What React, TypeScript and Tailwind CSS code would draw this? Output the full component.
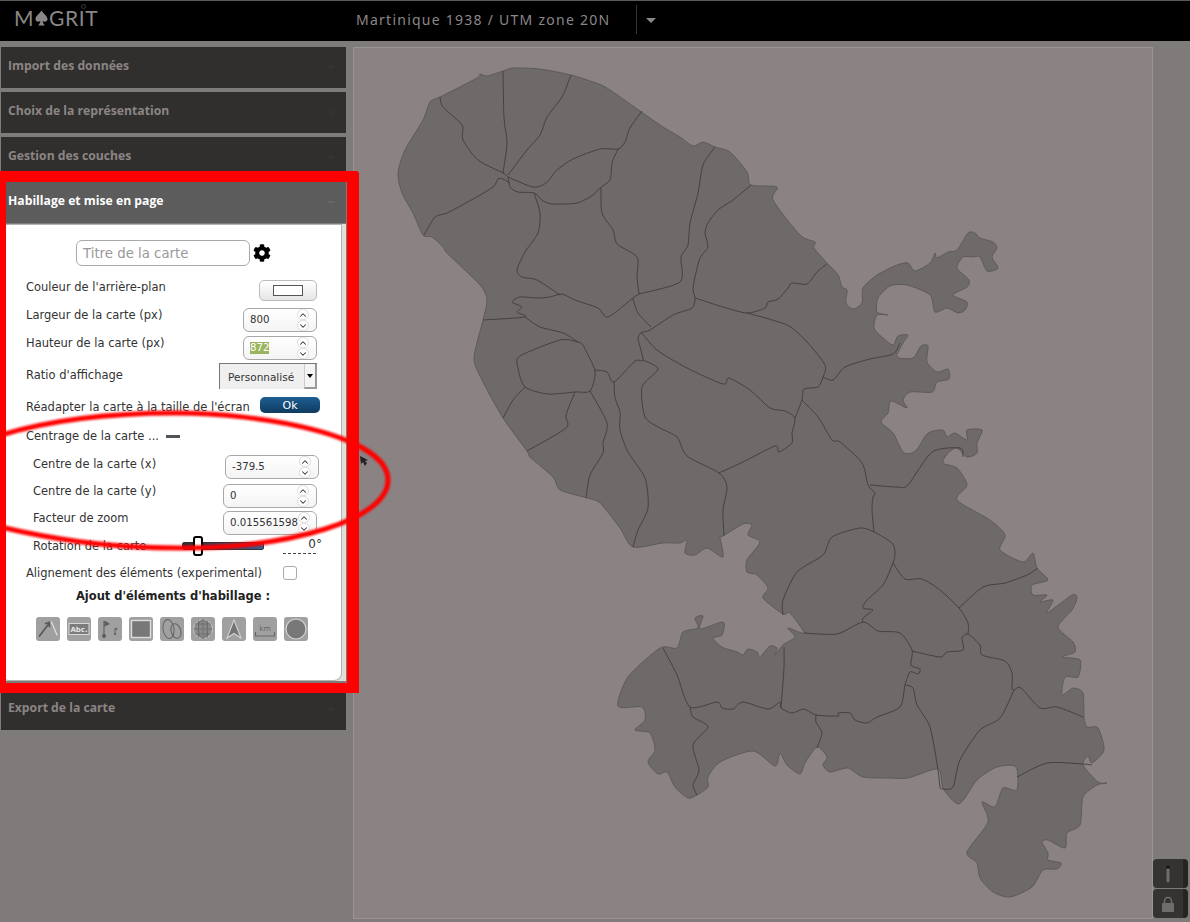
import React from "react";
import { ChevronUp, ChevronDown, Plus, Minus } from "lucide-react";
import { FaCog } from "react-icons/fa";

type Pt = [number, number];

// Catmull-Rom through the traced points, the island is hand traced from the picture
const smooth = (pts: Pt[], closed = false) => {
  const n = pts.length;
  const at = (i: number) => (closed ? pts[(i + n) % n] : pts[Math.max(0, Math.min(n - 1, i))]);
  let d = `M${pts[0][0]} ${pts[0][1]}`;
  const last = closed ? n : n - 1;
  for (let i = 0; i < last; i++) {
    const [p0, p1, p2, p3] = [at(i - 1), at(i), at(i + 1), at(i + 2)];
    const c1x = p1[0] + (p2[0] - p0[0]) / 8;
    const c1y = p1[1] + (p2[1] - p0[1]) / 8;
    const c2x = p2[0] - (p3[0] - p1[0]) / 8;
    const c2y = p2[1] - (p3[1] - p1[1]) / 8;
    d += `C${c1x.toFixed(1)} ${c1y.toFixed(1)} ${c2x.toFixed(1)} ${c2y.toFixed(1)} ${p2[0]} ${p2[1]}`;
  }
  return closed ? d + "Z" : d;
};

const outline: Pt[] = [
  [440, 97], [477, 78], [480, 74], [487, 76], [503, 71], [513, 68], [540, 69], [571, 75], [593, 82], [607, 88], [640, 111], [663, 127], [680, 137], [693, 146], [703, 142], [715, 147], [730, 152], [747, 172], [751, 185], [777, 187], [773, 200],
  [800, 235], [815, 242], [814, 248], [827, 263], [838, 275], [842, 287], [847, 290], [846, 303], [853, 309], [862, 303], [863, 288], [877, 275], [897, 265], [908, 263], [915, 271], [930, 263], [935, 253], [937, 258], [948, 252], [957, 250], [968, 233], [975, 233], [980, 238], [993, 242], [997, 248], [992, 257], [998, 268], [987, 271], [980, 257], [973, 257], [963, 257], [957, 268], [969, 280], [967, 287], [953, 295], [967, 302], [965, 310], [958, 313], [947, 308], [935, 312], [930, 295], [907, 285], [890, 286], [878, 298], [877, 312], [888, 315], [877, 315], [874, 328], [883, 338], [893, 345], [898, 336], [908, 335], [903, 343], [897, 357], [913, 358], [921, 346], [928, 346], [927, 362], [937, 372], [948, 369], [949, 379], [937, 382], [932, 392], [910, 392], [903, 400], [907, 408], [891, 401], [888, 413], [881, 422], [893, 433], [903, 452], [912, 453], [918, 448], [928, 433], [943, 430], [947, 437], [955, 433], [967, 440], [967, 430], [982, 430], [977, 443], [977, 453], [967, 457], [957, 448], [948, 453], [943, 463], [957, 468], [967, 485], [957, 500],
  [990, 520], [1005, 535], [1000, 550], [1023, 562], [1033, 553], [1037, 568], [1048, 580], [1032, 585], [1033, 595], [1047, 595], [1040, 602], [1053, 600], [1047, 613], [1072, 595], [1077, 598], [1072, 610], [1058, 627], [1073, 642], [1075, 652], [1062, 657], [1080, 660], [1078, 677], [1065, 677], [1062, 695], [1073, 688], [1083, 693], [1084, 717], [1087, 727], [1098, 728], [1104, 750], [1092, 763], [1088, 756], [1083, 765], [1098, 782], [1107, 783], [1097, 785], [1083, 797], [1080, 825], [1067, 833], [1065, 848], [1048, 840], [1042, 842], [1048, 853], [1048, 860], [1061, 863], [1057, 869], [1043, 870], [1032, 887], [1010, 897], [993, 892], [980, 878], [977, 863], [967, 852], [988, 822], [982, 802], [995, 807], [1003, 788], [1017, 790], [1016, 767], [997, 767], [977, 780], [959, 804], [943, 788], [938, 769], [908, 778], [890, 778], [863, 777], [848, 768], [830, 772], [823, 765], [827, 757], [817, 747], [805, 763], [800, 774], [787, 765], [780, 753], [775, 766], [753, 751], [720, 762], [708, 777], [708, 787], [697, 795], [688, 798], [675, 787], [667, 772], [658, 774], [648, 762], [655, 750], [650, 733], [635, 730], [645, 720], [642, 707], [618, 706], [628, 677], [660, 648], [677, 648], [683, 632], [698, 628], [695, 618], [703, 616], [700, 629], [723, 622], [722, 635], [713, 638], [722, 647], [737, 652], [743, 655], [748, 649], [757, 652], [760, 657], [770, 646], [777, 648], [775, 655], [783, 645], [795, 637], [788, 628], [804, 633], [790, 613], [783, 614], [763, 598], [768, 588], [757, 575], [747, 572], [747, 560], [760, 542], [748, 535], [752, 525], [743, 524], [723, 536], [720, 537], [723, 557], [707, 548], [695, 555], [685, 553], [687, 540], [680, 543], [663, 543], [633, 547],
  [620, 528], [600, 503], [587, 498], [560, 490], [553, 477], [530, 457], [527, 451], [503, 418], [482, 380], [474, 358], [483, 320], [487, 300], [480, 285], [447, 253], [443, 247], [432, 237], [423, 235], [413, 213], [402, 193], [398, 173], [405, 150], [423, 120], [430, 102],
];

const borders: Pt[][] = [
  [[440, 97], [443, 107], [462, 125], [463, 140], [478, 160], [503, 173], [508, 177]],
  [[503, 71], [504, 118], [507, 143], [503, 173]],
  [[571, 75], [562, 97], [547, 117], [540, 135], [527, 150], [508, 175]],
  [[642, 111], [630, 128], [625, 142], [618, 149], [600, 149], [573, 159], [557, 170], [546, 183], [533, 187], [508, 177]],
  [[508, 177], [510, 187], [518, 192], [534, 193], [543, 201], [553, 204], [577, 203], [593, 195], [600, 188], [610, 180], [612, 163], [618, 149]],
  [[424, 235], [435, 217], [447, 213], [473, 199], [493, 187], [498, 179], [503, 179], [510, 183]],
  [[534, 193], [540, 213], [538, 233], [525, 252], [517, 270], [522, 277], [537, 280], [560, 295]],
  [[601, 188], [602, 213], [613, 230], [617, 244], [637, 257], [637, 277], [639, 294]],
  [[715, 147], [703, 165], [698, 193], [690, 223], [688, 245], [681, 257], [680, 282], [639, 294]],
  [[751, 185], [733, 200], [718, 210], [708, 223], [705, 233], [708, 247], [700, 258], [695, 277], [693, 290], [695, 298], [692, 308], [673, 315], [650, 330], [642, 332]],
  [[695, 298], [723, 307], [747, 313], [765, 308], [768, 302], [778, 299], [788, 288], [792, 283], [807, 284], [817, 272], [827, 264]],
  [[747, 313], [787, 325], [807, 342], [825, 365], [823, 377], [818, 387], [804, 389], [802, 400], [795, 418]],
  [[802, 400], [818, 417], [832, 440], [840, 442], [862, 463], [868, 485], [875, 493], [873, 497], [872, 510], [874, 532]],
  [[823, 377], [833, 380], [845, 367], [870, 359], [893, 354], [900, 343]],
  [[870, 485], [897, 487], [908, 485], [932, 452], [960, 448], [963, 457]],
  [[641, 332], [657, 350], [687, 368], [723, 384], [729, 378], [750, 390], [770, 408], [785, 411], [795, 418], [792, 433], [792, 443], [779, 452], [775, 446], [743, 462], [719, 473]],
  [[633, 299], [638, 313], [651, 327]],
  [[639, 294], [633, 298], [608, 317], [598, 308], [575, 300], [562, 294], [550, 297], [537, 298], [520, 297], [512, 302], [522, 307], [517, 312], [525, 317], [483, 320]],
  [[525, 317], [540, 327], [563, 333], [578, 342]],
  [[583, 345], [578, 342], [560, 340], [520, 356], [518, 368], [525, 387], [548, 394], [575, 392], [590, 391], [595, 371], [583, 345]],
  [[595, 370], [607, 372], [614, 382], [635, 361], [643, 360], [638, 338], [642, 332]],
  [[643, 360], [658, 369], [642, 387], [645, 417], [660, 428], [677, 437], [687, 456], [719, 473], [727, 487], [723, 510], [724, 536]],
  [[614, 382], [615, 398], [620, 412], [620, 430], [628, 452], [645, 478], [648, 508], [638, 530], [633, 547]],
  [[590, 391], [607, 423], [603, 443], [603, 453], [590, 475], [586, 498]],
  [[575, 392], [566, 415], [566, 428], [527, 451]],
  [[525, 387], [513, 400], [503, 418]],
  [[783, 615], [783, 600], [797, 572], [823, 555], [832, 537], [860, 528], [874, 532], [892, 543], [895, 553], [893, 563], [883, 585], [867, 600], [863, 608], [873, 610], [863, 618], [863, 622]],
  [[804, 633], [837, 634], [863, 622], [878, 631], [900, 633], [912, 650], [911, 665], [920, 669], [918, 674], [910, 672], [905, 685], [900, 707], [877, 717], [867, 723], [855, 720], [850, 713], [838, 713], [838, 716], [816, 715], [804, 709], [792, 713], [781, 708], [780, 702], [768, 709], [743, 702], [733, 709], [722, 708], [717, 702], [690, 707], [677, 675], [663, 648]],
  [[784, 647], [784, 667], [782, 695], [781, 708]],
  [[690, 707], [693, 717], [708, 727], [693, 745], [699, 770], [693, 785], [697, 795]],
  [[816, 715], [816, 722], [822, 733], [817, 748]],
  [[905, 685], [913, 688], [917, 705], [930, 727], [938, 770], [940, 787], [943, 789], [953, 787], [960, 760], [980, 730], [1000, 718], [1014, 690]],
  [[912, 651], [940, 657], [947, 652], [963, 650], [962, 638], [968, 634], [980, 645], [982, 655], [1005, 661], [1012, 673], [1012, 688], [1014, 690], [1021, 688], [1040, 708], [1057, 707], [1083, 717]],
  [[893, 563], [905, 579], [922, 579], [940, 590], [959, 608], [968, 623], [968, 634]],
  [[959, 608], [983, 587], [1005, 583], [1027, 575], [1038, 568]],
  [[1017, 777], [1047, 763], [1083, 764], [1092, 765]],
];

const MapDrawing = () => (
  <svg viewBox="353 47 800 872" width="800" height="872" className="block">
    <path d={smooth(outline, true)} fill="#6f6a6a" stroke="#5b5757" strokeWidth="0.9" />
    {borders.map((b, i) => (
      <path key={i} d={smooth(b)} fill="none" stroke="#3f3c3c" strokeWidth="0.9" />
    ))}
  </svg>
);

const PanelHeader = ({ label, open = false }: { label: string; open?: boolean }) => (
  <div
    className={`flex h-[41px] w-[345px] items-center justify-between pb-[2px] pl-[7px] pr-[9px] text-[12.2px] font-bold ${
      open ? "bg-[#5c5c5c] text-white" : "bg-[#312f2d] text-[#8b8585]"
    }`}
  >
    <span>{label}</span>
    {open ? (
      <Minus className="h-3 w-3 text-[#6b7070]" />
    ) : (
      <Plus className="h-3 w-3 text-[#383634]" />
    )}
  </div>
);

const Spinner = ({ value, selected = false, className = "" }: { value: string; selected?: boolean; className?: string }) => (
  <div
    className={`flex h-6 items-center justify-between rounded-[6px] border border-[#a8a8a8] bg-gradient-to-b from-white to-[#f4f4f4] pl-[6px] pr-[7px] text-[10.2px] text-[#333] ${className}`}
  >
    {selected ? <span className="bg-[#9bb55f] text-white">{value}</span> : <span>{value}</span>}
    <div className="flex flex-col">
      <span className="flex h-[11px] w-3 items-center justify-center rounded-full border border-[#ddd] bg-white">
        <ChevronUp className="h-[10px] w-[10px] text-[#333]" strokeWidth={2.5} />
      </span>
      <span className="flex h-[11px] w-3 items-center justify-center rounded-full border border-[#ddd] bg-white">
        <ChevronDown className="h-[10px] w-[10px] text-[#333]" strokeWidth={2.5} />
      </span>
    </div>
  </div>
);

const ToolIcon = ({ children }: { children: React.ReactNode }) => (
  <div className="flex h-6 w-6 items-center justify-center rounded-[3px] bg-[#a0a0a0]">{children}</div>
);

const tools = [
  <svg key="arrow" viewBox="0 0 24 24" className="h-6 w-6" fill="none" strokeLinecap="round">
    <path d="M3.5 19 13 6.5M9.5 6.5 13 5.5l.5 4" stroke="#5a5a5a" strokeWidth="1.8" />
    <path d="M15.5 5 21 18" stroke="#e0e0e0" strokeWidth="1.2" />
  </svg>,
  <svg key="text" viewBox="0 0 24 24" className="h-6 w-6">
    <rect x="2" y="6.5" width="20" height="11" fill="#7c7c7c" stroke="#d8d8d8" strokeWidth="1" />
    <text x="12" y="14.800" textAnchor="middle" fontSize="7" fontWeight="700" fill="#e4e4e4" fontFamily="'DejaVu Sans', sans-serif">
      Abc.
    </text>
  </svg>,
  <svg key="flags" viewBox="0 0 24 24" className="h-6 w-6" fill="#5c5c5c">
    <path d="M6 4v15" stroke="#5c5c5c" strokeWidth="1.1" />
    <path d="M6.500 3.500 12 7l-5.500 2.500z" />
    <circle cx="6" cy="19" r="2" />
    <path d="M17 11v6" stroke="#5c5c5c" strokeWidth="0.9" />
    <path d="M17.500 10.500 20 12l-2.500 1.500z" />
    <circle cx="17" cy="17" r="1.100" />
  </svg>,
  <svg key="rect" viewBox="0 0 24 24" className="h-6 w-6">
    <rect x="2.500" y="3.500" width="19" height="17" fill="#787878" stroke="#dcdcdc" strokeWidth="1.400" />
  </svg>,
  <svg key="ellipses" viewBox="0 0 24 24" className="h-6 w-6" fill="none" stroke="#626262" strokeWidth="1">
    <ellipse cx="8.500" cy="12" rx="5.500" ry="9.500" transform="rotate(-8 8.500 12)" />
    <ellipse cx="16" cy="14" rx="4.800" ry="7.500" transform="rotate(-18 16 14)" />
  </svg>,
  <svg key="globe" viewBox="0 0 24 24" className="h-6 w-6" fill="none" stroke="#6c6c6c" strokeWidth="0.8">
    <circle cx="12" cy="12" r="9.500" fill="#8a8a8a" stroke="#cfcfcf" />
    <ellipse cx="12" cy="12" rx="4.500" ry="9.500" />
    <path d="M12 2.500v19M2.500 12h19M4 7h16M4 17h16M7.500 3.500v17M16.500 3.500v17" />
  </svg>,
  <svg key="north" viewBox="0 0 24 24" className="h-6 w-6">
    <path d="M12 3 19 21 12 16.500 5 21z" fill="#747474" stroke="#d2d2d2" strokeWidth="1.100" />
  </svg>,
  <svg key="scale" viewBox="0 0 24 24" className="h-6 w-6" fill="none">
    <path d="M2.500 15v4h19v-4" stroke="#666" strokeWidth="1.200" />
    <text x="12" y="14" textAnchor="middle" fontSize="7.500" fill="#666" fontFamily="'DejaVu Sans', sans-serif">
      km
    </text>
  </svg>,
  <svg key="circle" viewBox="0 0 24 24" className="h-6 w-6">
    <circle cx="12" cy="12" r="10" fill="#787878" stroke="#d8d8d8" strokeWidth="1.100" />
  </svg>,
];

const MapOptions = () => (
  <div className="w-[345px] bg-[#e0e0d8]">
    <div className="h-[457px] w-[341px] rounded-b-[8px] border-b border-r border-t border-[#b4b4ae] bg-white text-[11.5px] leading-[12px] text-[#333]" style={{ fontFamily: "'DejaVu Sans', sans-serif" }}>
      <div className="ml-[75px] mt-[15px] flex items-center gap-[3px]">
        <div className="flex h-[26px] w-[174px] items-center rounded-[6px] border border-[#aaa] pl-[6px] pt-px text-[13.3px] text-[#999]">
          Titre de la carte
        </div>
        <FaCog className="h-[18px] w-[18px] text-black" />
      </div>

      <div className="mt-[14px] flex items-start justify-between pl-[25px] pr-[24px]">
        <span className="pt-px">Couleur de l'arrière-plan</span>
        <div className="flex h-[21px] w-[58px] items-center justify-center rounded-[5px] border border-[#bbb] bg-gradient-to-b from-white to-[#e6e6e6]">
          <div className="h-[11px] w-[30px] border border-[#555] bg-white" />
        </div>
      </div>

      <div className="mt-[7px] flex items-start justify-between pl-[25px] pr-[24px]">
        <span className="pt-px">Largeur de la carte (px)</span>
        <Spinner value="800" className="w-[74px]" />
      </div>

      <div className="mt-[4px] flex items-start justify-between pl-[25px] pr-[24px]">
        <span className="pt-px">Hauteur de la carte (px)</span>
        <Spinner value="872" selected className="w-[74px]" />
      </div>

      <div className="mt-[3px] flex items-start justify-between pl-[25px] pr-[24px]">
        <span className="pt-[6px]">Ratio d'affichage</span>
        <div className="flex h-[26px] w-[98px] items-stretch border-l border-t border-[#777] bg-[#efefef] pl-2 text-[10.5px]">
          <span className="flex-1 self-center">Personnalisé</span>
          <span className="flex w-[13px] items-center justify-center border-b-2 border-l border-r-2 border-b-[#999] border-l-[#ccc] border-r-[#999] bg-[#f4f4f4]">
            <span className="h-0 w-0 border-x-[3px] border-t-[4px] border-x-transparent border-t-black" />
          </span>
        </div>
      </div>

      <div className="mt-[8px] flex items-start justify-between pl-[25px] pr-[21px]">
        <span className="pt-[4px]">Réadapter la carte à la taille de l'écran</span>
        <div className="flex h-4 w-[60px] items-center justify-center rounded-[5px] bg-gradient-to-b from-[#1e5f93] to-[#0f3b60] pt-px text-[11px] text-white">
          Ok
        </div>
      </div>

      <div className="ml-[25px] mt-[17px] flex h-3 items-center gap-[7px]">
        <span>Centrage de la carte ...</span>
        <span className="h-[3px] w-[14px] bg-[#4f5558]" />
      </div>

      <div className="mt-[13px] flex items-start justify-between pl-[32px] pr-[22px]">
        <span className="pt-[3px]">Centre de la carte (x)</span>
        <Spinner value="-379.5" className="w-[94px]" />
      </div>

      <div className="mt-[5px] flex items-start justify-between pl-[32px] pr-[24px]">
        <span className="pt-px">Centre de la carte (y)</span>
        <Spinner value="0" className="w-[94px]" />
      </div>

      <div className="mt-[3px] flex items-start justify-between pl-[32px] pr-[24px]">
        <span className="pt-px">Facteur de zoom</span>
        <Spinner value="0.015561598" className="w-[94px]" />
      </div>

      <div className="mt-[1px] flex h-5 items-center pl-[32px]">
        <span className="w-[149px]">Rotation de la carte</span>
        <div className="relative h-[8px] w-[82px] rounded-[2px] border border-[#333] bg-gradient-to-r from-[#2c2c3c] to-[#3c5c8c]">
          <div className="absolute -top-[7px] left-[10px] h-5 w-[10px] rounded-[3px] border-2 border-black bg-white" />
        </div>
        <div className="ml-[19px] h-[16px] w-[33px] border-b border-dashed border-[#444] text-right text-[12px] leading-[12px]">
          <span className="relative left-[6px]">0°</span>
        </div>
      </div>

      <div className="ml-[25px] mt-[10px] flex h-[14px] items-center">
        <span className="w-[257px]">Alignement des éléments (experimental)</span>
        <div className="h-[14px] w-[14px] rounded-[3px] border border-[#aaa] bg-white" />
      </div>

      <div className="mt-[10px] w-[344px] text-center text-[11.5px] font-bold text-[#222]">Ajout d'éléments d'habillage :</div>

      <div className="ml-[35px] mt-[15px] flex gap-[7px]">
        {tools.map((icon, i) => (
          <ToolIcon key={i}>{icon}</ToolIcon>
        ))}
      </div>
    </div>
  </div>
);

const App = () => (
  <div className="relative h-[922px] w-[1190px] overflow-hidden bg-[#807b7b]" style={{ fontFamily: "'Open Sans', sans-serif" }}>
    <header className="flex h-[41px] items-start border-t border-[#5a5a5a] bg-black">
      <div className="relative ml-[14px] mt-[6px] flex w-[342px] items-center text-[21px] leading-[22px] tracking-[0.6px] text-[#8b8787]" style={{ fontFamily: "Lato, sans-serif" }}>
        <span>M</span>
        <svg viewBox="0 0 20 22" className="h-[18px] w-[15px]" fill="#8b8787">
          <path d="M10 1C7 6 2 8 2 12.500c0 3 3.500 4.500 6.500 2.500C8.300 17.500 7 19.500 5.500 21h9c-1.500-1.500-2.800-3.500-3-6 3 2 6.500.500 6.500-2.500C18 8 13 6 10 1z" />
        </svg>
        <span>GRIT</span>
        <span className="absolute left-[67px] -top-[3px] h-[5px] w-[5px] rounded-full border border-[#3c3a3a]" />
      </div>
      <div className="mt-[9px] w-[280px] text-[14px] leading-[20px] tracking-[1.25px] text-[#8b8787]" style={{ fontFamily: "'Noto Sans', sans-serif" }}>
        Martinique 1938 / UTM zone 20N
      </div>
      <div className="mt-[4px] h-[29px] w-px bg-[#333]" />
      <span className="ml-[9px] mt-[17px] h-0 w-0 border-x-[5px] border-t-[5px] border-x-transparent border-t-[#8b8787]" />
    </header>

    <div className="flex items-start pt-[6px]">
      <aside className="ml-px flex w-[345px] flex-col">
        <PanelHeader label="Import des données" />
        <div className="mt-[4px]"><PanelHeader label="Choix de la représentation" /></div>
        <div className="mt-[4px]"><PanelHeader label="Gestion des couches" /></div>
        <div className="mt-[4px]"><PanelHeader label="Habillage et mise en page" open /></div>
        <div className="mt-px"><MapOptions /></div>
        <div className="mt-[8px]"><PanelHeader label="Export de la carte" /></div>
      </aside>
      <main className="ml-[7px] bg-[#8b8383] outline outline-1 -outline-offset-1 outline-[#9a9494]">
        <MapDrawing />
      </main>
    </div>

    {/* annotation drawn over the screenshot */}
    <div className="pointer-events-none absolute left-0 top-[171px] h-[522px] w-[359px] rounded-tr-[3px] border-b-[10px] border-l-[6px] border-r-[12px] border-t-[11px] border-[#ff0000]" />
    <svg className="pointer-events-none absolute left-0 top-0 blur-[1px]" width="1190" height="922" fill="none">
      <path d="M-20 442C40 420 110 413 175 413C260 413 388 435 388 480C388 520 290 548 180 548C110 548 50 540-20 522" stroke="#ff0000" strokeWidth="5" />
    </svg>
    <svg className="absolute left-[359px] top-[455px] h-[13px] w-[10px]" viewBox="0 0 10 13" fill="none">
      <path d="M1 1 2 9 4 7 6 11 8 8 6 6 9 5z" fill="#222" />
    </svg>

    <div className="absolute left-[1153px] top-[859px] flex flex-col gap-px">
      <div className="flex h-[29px] w-[35px] items-center justify-center rounded-[4px] border-r-[5px] border-[#262423] bg-[#353331]">
        <svg viewBox="0 0 6 16" className="h-4 w-[6px]">
          <rect x="1.500" y="0" width="3" height="2" fill="#111" />
          <rect x="1.500" y="3" width="3" height="13" fill="#6f6c6c" />
        </svg>
      </div>
      <div className="flex h-[29px] w-[35px] items-center justify-center rounded-[4px] border-r-[5px] border-[#262423] bg-[#353331]">
        <svg viewBox="0 0 14 16" className="h-4 w-[14px]" fill="none">
          <path d="M3.500 8V5a3.500 3.500 0 0 1 7 0v3" stroke="#6f6c6c" strokeWidth="1.500" />
          <rect x="1" y="7" width="12" height="9" rx="1" fill="#6f6c6c" />
        </svg>
      </div>
    </div>
  </div>
);

export default App;
